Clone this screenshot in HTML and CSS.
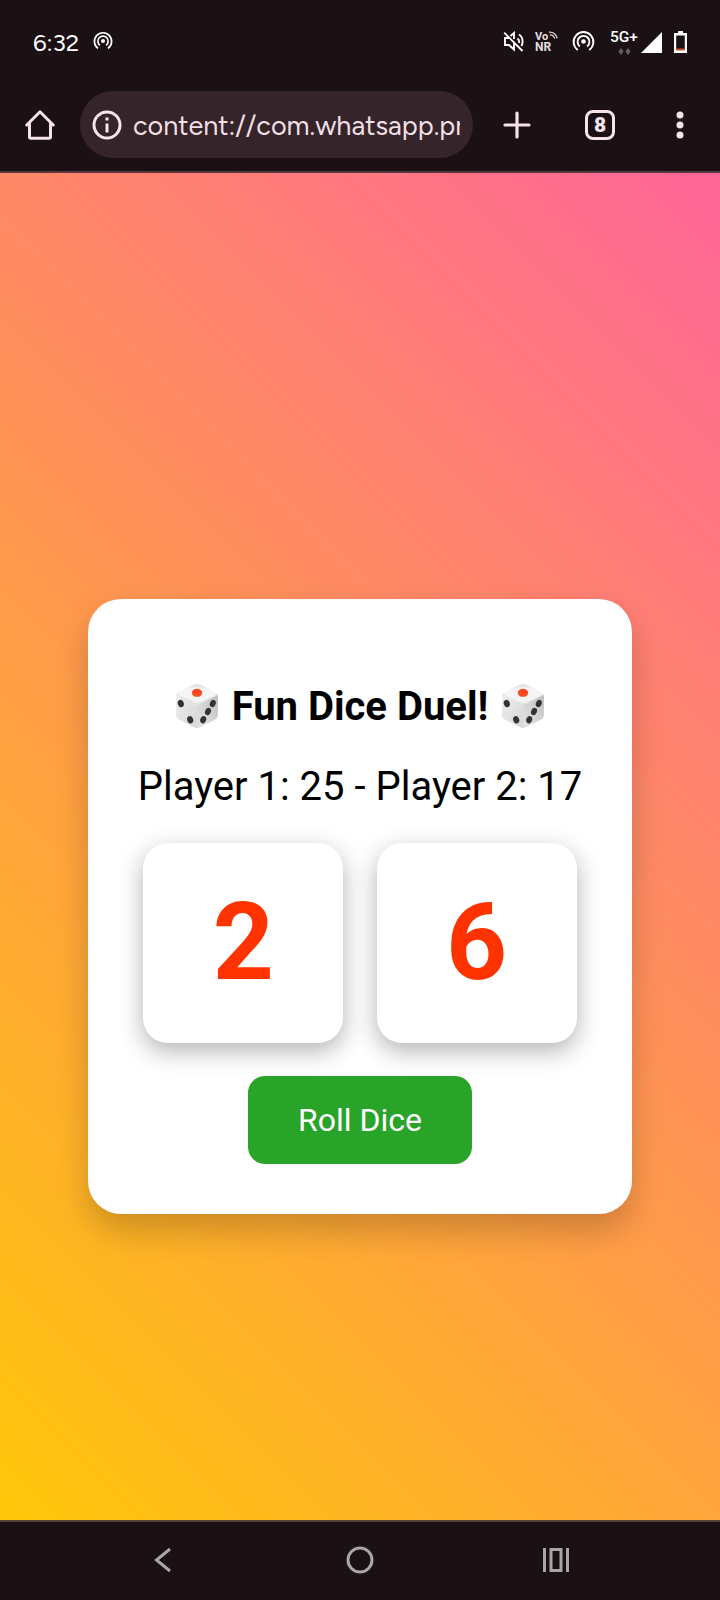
FILE: index.html
```html
<!DOCTYPE html>
<html lang="en">
<head>
<meta charset="utf-8">
<title>Fun Dice Duel</title>
<link rel="stylesheet" href="styles.css">
</head>
<body>
<svg width="0" height="0" class="defs" aria-hidden="true">
  <defs>
    <linearGradient id="dl" x1="0" y1="0" x2="1" y2="1"><stop offset="0" stop-color="#eeeeee"/><stop offset="1" stop-color="#d6d6d6"/></linearGradient>
    <linearGradient id="dr" x1="1" y1="0" x2="0" y2="1"><stop offset="0" stop-color="#bdbdbd"/><stop offset=".45" stop-color="#d2d2d2"/><stop offset="1" stop-color="#e2e2e2"/></linearGradient>
    <symbol id="die" viewBox="0 0 44 46">
      <path d="M3 10Q1 11 1 14L1.200 33Q2 35.500 5 37L19 44Q22 45.500 25 44L39 37Q42 35.500 42.800 32.500L43 14Q43 11 41 10L26 2Q22 .3 18 2Z" fill="#e4e4e4"/>
      <path d="M1 12Q11 17 22 22.500L22 45Q20.500 45 19 44L4 36.500Q1.300 35 1.200 32Z" fill="url(#dl)"/>
      <path d="M43 12Q33 17 22 22.500L22 45Q23.500 45 25 44L40 36.500Q42.700 35 42.800 32Z" fill="url(#dr)"/>
      <path d="M18 2.200Q22 .6 26 2.200L40 9.200Q42 10.800 39.500 12.500L26 18.800Q22 20.300 18 18.800L4.500 12.500Q2 10.800 4 9.200Z" fill="#f5f5f5"/>
      <path d="M12 5L18 2.200Q22 .6 26 2.200L32 5Q22 3.500 12 5Z" fill="#e4e4e4"/>
      <ellipse cx="22" cy="9.800" rx="5.200" ry="4" fill="#ff4a20"/>
      <g fill="#333">
        <ellipse cx="5.800" cy="20.500" rx="3" ry="3.700" transform="rotate(-20 5.800 20.500)"/>
        <ellipse cx="15.200" cy="36.700" rx="3" ry="3.700" transform="rotate(-20 15.200 36.700)"/>
        <ellipse cx="37.800" cy="20.500" rx="2.900" ry="3.700" transform="rotate(22 37.800 20.500)"/>
        <ellipse cx="33" cy="28.500" rx="2.900" ry="3.700" transform="rotate(22 33 28.500)"/>
        <ellipse cx="28.200" cy="36.700" rx="2.900" ry="3.700" transform="rotate(22 28.200 36.700)"/>
      </g>
    </symbol>
    <symbol id="cast" viewBox="0 0 24 24">
      <circle cx="12" cy="12" r="2.400" fill="#fff"/>
      <path d="M8.200 17.200A6.200 6.200 0 1 1 15.800 17.200M6 20.800A10.300 10.300 0 1 1 18 20.800" fill="none" stroke="#fff" stroke-width="2"/>
    </symbol>
  </defs>
</svg>
<header class="chrome">
  <div class="status">
    <span class="time">6:32</span>
    <svg class="cast-small"><use href="#cast"/></svg>
    <span class="grow"></span>
    <svg class="mute" viewBox="0 0 22 22" fill="none" stroke="#fff" stroke-width="1.900"><path d="M1.200 1.700L19.500 20M5.500 7H2v7h4l5 4.500V12M7.500 5l3.500-3v6M14.500 7.500q2 1.500 1.600 4.500M16 3.500Q20 6 19.500 11.500 19.400 13 18.500 15"/></svg>
    <span class="vonr"><span class="vo">Vo<svg width="9" height="9" viewBox="0 0 10 10" fill="none" stroke="#ddd" stroke-width="1.400"><path d="M0 1.200Q7 .8 9.200 8M1 4.200Q5 4 6.500 8.500"/></svg></span><span>NR</span></span>
    <svg class="cast-big"><use href="#cast"/></svg>
    <span class="network"><span class="fiveg">5G+</span><svg width="13" height="7" viewBox="0 0 13 7" fill="#666062"><path d="M3 0L5.500 3.500 3 7 .5 3.500ZM10 0l2.500 3.500L10 7 7.500 3.500Z"/></svg></span>
    <svg class="signal" viewBox="0 0 21 21"><path d="M21 0V21H0Z" fill="#fff"/></svg>
    <svg class="battery" viewBox="0 0 13 22"><path d="M4 0h5v2h4v20H0V2h4Z" fill="#fff"/><path d="M2.200 4.500h8.600V18H2.200Z" fill="#1c1114"/><path d="M2.200 17.500h8.600v2H2.200Z" fill="#c9512d"/></svg>
  </div>
  <div class="toolbar">
    <svg class="home" viewBox="0 0 30 30" fill="none" stroke="#f5e3e6" stroke-width="3" stroke-linejoin="round" stroke-linecap="round"><path d="M1.800 15L15 1.800 28.200 15M4.500 13V27Q4.500 28.300 6 28.300H24Q25.500 28.300 25.500 27V13"/></svg>
    <div class="url">
      <svg class="info" viewBox="0 0 30 30"><circle cx="15" cy="15" r="13" fill="none" stroke="#f8e6e9" stroke-width="3"/><path d="M13.500 7.500h3v3h-3zM13.500 13.500h3v9h-3z" fill="#f8e6e9"/></svg>
      <span class="address">content://com.whatsapp.pr</span>
    </div>
    <svg class="plus" viewBox="0 0 28 28" stroke="#f5e3e6" stroke-width="3.200" stroke-linecap="round"><path d="M14 2V26M2 14H26"/></svg>
    <span class="tabs">8</span>
    <svg class="more" viewBox="0 0 8 28" fill="#f5e3e6"><circle cx="4" cy="4" r="3.500"/><circle cx="4" cy="14" r="3.500"/><circle cx="4" cy="24" r="3.500"/></svg>
  </div>
</header>
<main class="viewport">
  <div class="page">
    <section class="card">
      <h2 class="title"><svg class="die-icon"><use href="#die"/></svg><span class="title-text">Fun Dice Duel!</span><svg class="die-icon"><use href="#die"/></svg></h2>
      <p class="score">Player 1: 25 - Player 2: 17</p>
      <div class="dice"><div class="face">2</div><div class="face">6</div></div>
      <button class="roll">Roll Dice</button>
    </section>
  </div>
</main>
<nav class="navbar">
  <svg viewBox="0 0 28 28"><path d="M18 3L4.500 14 18 25" transform="translate(2 0)"/></svg>
  <svg viewBox="0 0 28 28"><circle cx="14" cy="14" r="12"/></svg>
  <svg viewBox="0 0 28 28"><path d="M2.500 2V26M25.500 2V26M9 3.500H19V24.500H9Z"/></svg>
</nav>
</body>
</html>
```

FILE: styles.css
```css
* { box-sizing: border-box; }
body {
  margin: 0;
  width: 720px;
  height: 1600px;
  display: flex;
  flex-direction: column;
  overflow: hidden;
  background: #1b1114;
  font-family: Roboto, sans-serif;
}
svg { display: block; flex: none; }
.defs { position: absolute; }
.chrome { height: 173px; flex: none; border-bottom: 2px solid #55393f; }
.status { height: 84px; display: flex; align-items: center; padding: 0 33px; color: #fff; }
.time { font: 24px/30px Figtree, Lato, sans-serif; width: 47px; white-space: nowrap; padding-top: 1px; }
.cast-small { width: 20px; height: 20px; margin-left: 13px; margin-top: -2px; }
.grow { flex: 1; }
.mute { width: 22px; height: 22px; }
.vonr { width: 23px; margin-left: 10px; font: bold 12px/11px Roboto, sans-serif; display: flex; flex-direction: column; color: #e4dfe0; }
.vo { display: flex; gap: 1px; font-size: 11px; }
.cast-big { width: 23px; height: 23px; margin-left: 14px; margin-top: -2px; }
.network { width: 28px; margin-left: 15px; height: 26px; display: flex; flex-direction: column; align-items: center; justify-content: space-between; }
.fiveg { font: 500 15.5px/17px Roboto, sans-serif; }
.signal { width: 21px; height: 21px; margin-left: 3px; }
.battery { width: 13px; height: 22px; margin-left: 12px; }
.toolbar { display: flex; align-items: center; height: 81px; padding-left: 25px; }
.home { width: 30px; height: 30px; }
.url { margin-left: 25px; width: 393px; height: 67px; border-radius: 34px; background: #35252a; display: flex; align-items: center; padding: 0 13px 0 12px; }
.info { width: 30px; height: 30px; }
.address { margin-left: 11px; width: 327px; overflow: hidden; white-space: nowrap; color: #f2dfe3; font: 27px/36px Figtree, Lato, sans-serif; letter-spacing: 0; padding-top: 2px; }
.plus { width: 28px; height: 28px; margin-left: 30px; }
.tabs { margin-left: 54px; width: 30px; height: 30px; border: 3px solid #f5e3e6; border-radius: 8px; font: 900 21px/25px Roboto, sans-serif; text-align: center; color: #f5e3e6; }
.more { width: 8px; height: 28px; margin-left: 61px; }
.viewport { height: 1347px; flex: none; overflow: hidden; }
.page {
  height: 1467px;
  display: flex;
  align-items: center;
  justify-content: center;
  background: linear-gradient(45deg, #ffcc00, #ff6699);
}
.card {
  width: 544px;
  height: 615px;
  padding: 84px 50px 49px;
  border-radius: 33px;
  background: #fff;
  box-shadow: 0 17px 33px rgba(0, 0, 0, .2);
  display: flex;
  flex-direction: column;
  align-items: center;
}
.title { margin: 0; display: flex; align-items: center; height: 47px; font-size: 40px; line-height: 47px; }
.title-text { margin: 0 13px; white-space: nowrap; }
.die-icon { width: 44px; height: 46px; margin-top: -2px; }
.score { margin: 33px 0 32.500px; font-size: 40px; line-height: 47px; white-space: nowrap; }
.dice { display: flex; gap: 33.300px; }
.face {
  width: 200px;
  height: 200px;
  border-radius: 25px;
  background: #fff;
  box-shadow: 0 8px 25px rgba(0, 0, 0, .3);
  color: #ff3300;
  font-size: 106.67px;
  font-weight: bold;
  line-height: 200px;
  text-align: center;
}
.roll {
  margin-top: 33.500px;
  width: 224px;
  height: 88px;
  padding: 0;
  border: 0;
  border-radius: 17px;
  background: #28a428;
  color: #fff;
  font: 32px/88px Roboto, sans-serif;
}
.navbar { flex: 1; border-top: 2px solid #55443e; display: flex; justify-content: center; align-items: center; gap: 168px; padding-bottom: 2px; }
.navbar svg { width: 28px; height: 28px; fill: none; stroke: #aaa5a6; stroke-width: 3; }
```
